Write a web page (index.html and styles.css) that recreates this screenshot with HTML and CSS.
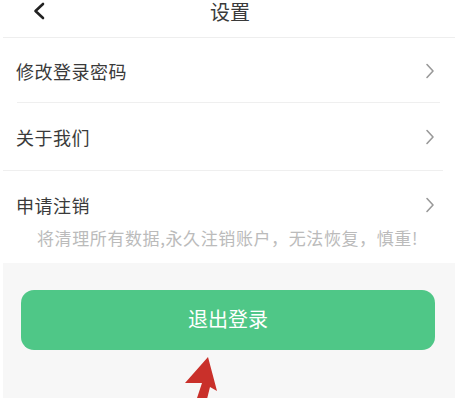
FILE: index.html
```html
<!DOCTYPE html>
<html lang="zh">
<head>
<meta charset="utf-8">
<link rel="stylesheet" href="styles.css">
</head>
<body>
<div class="page">
  <header class="header">
    <svg class="back" width="14" height="18" viewBox="0 0 14 18"><path d="M11 2 L3.5 9 L11 16" fill="none" stroke="#222" stroke-width="2.6" stroke-linecap="round" stroke-linejoin="round"/></svg>
    <h1 class="title">设置</h1>
  </header>
  <div class="list">
    <div class="row row-first">
      <span class="label">修改登录密码</span>
      <svg class="chev" width="10" height="16" viewBox="0 0 10 16"><path d="M2 1.5 L8 8 L2 14.5" fill="none" stroke="#999" stroke-width="1.6" stroke-linecap="round" stroke-linejoin="round"/></svg>
    </div>
    <div class="row row-second">
      <span class="label">关于我们</span>
      <svg class="chev" width="10" height="16" viewBox="0 0 10 16"><path d="M2 1.5 L8 8 L2 14.5" fill="none" stroke="#999" stroke-width="1.6" stroke-linecap="round" stroke-linejoin="round"/></svg>
    </div>
    <div class="row row-third">
      <span class="label">申请注销</span>
      <svg class="chev" width="10" height="16" viewBox="0 0 10 16"><path d="M2 1.5 L8 8 L2 14.5" fill="none" stroke="#999" stroke-width="1.6" stroke-linecap="round" stroke-linejoin="round"/></svg>
    </div>
    <p class="note">将清理所有数据,永久注销账户，无法恢复，慎重!</p>
  </div>
  <div class="footer">
    <button class="logout">退出登录</button>
  </div>
  <svg class="arrow" width="60" height="50" viewBox="0 0 60 50"><path d="M28 0 L37 34 L30 30 L25 50 L14 50 L22 26 L5 26 Z" fill="#c9302a"/></svg>
</div>
</body>
</html>
```
FILE: styles.css
```css
* { box-sizing: border-box; }
html, body { margin: 0; padding: 0; }
body {
  width: 455px;
  height: 398px;
  overflow: hidden;
  background: #fff;
  font-family: "Noto Sans CJK SC", "Noto Sans", sans-serif;
}
.page {
  position: relative;
  width: 455px;
  height: 398px;
  display: flex;
  flex-direction: column;
}
.header {
  height: 38px;
  margin-left: 3px;
  border-bottom: 1px solid #eeeeee;
  display: flex;
  align-items: flex-start;
  justify-content: center;
  position: relative;
}
.back {
  position: absolute;
  left: 29px;
  top: 2px;
}
.title {
  margin: 0;
  font-size: 20px;
  font-weight: 400;
  color: #3a3a3a;
  line-height: 24px;
  padding-left: 2px;
}
.list {
  display: flex;
  flex-direction: column;
}
.row {
  display: flex;
  align-items: center;
  justify-content: space-between;
  padding-left: 16px;
  padding-right: 20px;
}
.row-first {
  height: 65px;
  position: relative;
}
.row-first::after {
  content: "";
  position: absolute;
  left: 17px;
  right: 15px;
  bottom: 0;
  height: 1px;
  background: #efefef;
}
.row-second {
  height: 68px;
  margin-left: 3px;
  padding-left: 13px;
  margin-right: 12px;
  padding-right: 8px;
  border-bottom: 1px solid #efefef;
}
.row-third {
  height: 36px;
  margin-top: 16px;
}
.label {
  font-size: 18px;
  color: #3a3a3a;
  letter-spacing: 0.5px;
  line-height: 24px;
}
.chev { display: block; }
.note {
  margin: 0;
  height: 40px;
  padding-top: 3px;
  text-align: center;
  font-size: 17px;
  line-height: 24px;
  color: #bbbbbb;
  letter-spacing: 0.6px;
}
.footer {
  flex: 1;
  background: #f7f7f7;
  margin-left: 3px;
  padding: 27px 20px 0 18px;
}
.logout {
  display: block;
  width: 100%;
  height: 60px;
  border: none;
  border-radius: 13px;
  background: #4fc787;
  color: #fff;
  font-family: "Noto Sans CJK SC", "Noto Sans", sans-serif;
  font-size: 20px;
  line-height: 24px;
  padding: 0 0 3px 0;
}
.arrow {
  position: absolute;
  left: 180px;
  top: 357px;
}
```
